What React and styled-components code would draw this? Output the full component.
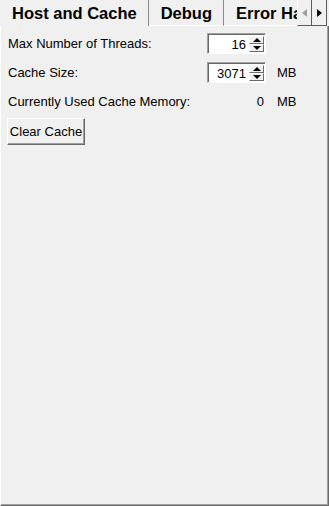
import React from 'react';
import styled, { createGlobalStyle } from 'styled-components';

const GlobalStyle = createGlobalStyle`
  html, body {
    margin: 0;
    padding: 0;
    background: #f0f0f0;
  }
  body {
    font-family: "Liberation Sans", Arial, sans-serif;
    color: #000;
  }
`;

const Window = styled.div`
  width: 329px;
  height: 506px;
  display: flex;
  flex-direction: column;
  background: #f0f0f0;
  overflow: hidden;
`;

const TabStrip = styled.div`
  display: flex;
  height: 26px;
  flex-shrink: 0;
  padding-right: 2px;
`;

const TabList = styled.div`
  flex: 1;
  display: flex;
  overflow: hidden;
  min-width: 0;
`;

const Tab = styled.div`
  flex-shrink: 0;
  box-sizing: border-box;
  height: 26px;
  padding: 1px 11px 0 12px;
  display: flex;
  align-items: center;
  font-size: 16.5px;
  font-weight: bold;
  white-space: nowrap;
  border-right: 1px solid #8a8a8a;
  border-bottom: ${(p) => (p.$active ? 'none' : '1px solid #fff')};
`;

const ScrollButton = styled.div`
  width: 15px;
  height: 26px;
  box-sizing: border-box;
  display: flex;
  align-items: center;
  justify-content: center;
  background: #f0f0f0;
  border-right: 1px solid #5a5a5a;
  border-bottom: 1px solid #5a5a5a;
  border-left: ${(p) => (p.$first ? '1px solid #fff' : 'none')};
  flex-shrink: 0;
`;

const Arrow = styled.span`
  width: 0;
  height: 0;
  border-top: 4.5px solid transparent;
  border-bottom: 4.5px solid transparent;
  ${(p) =>
    p.$dir === 'left'
      ? `border-right: 5px solid ${p.$disabled ? '#a0a0a0' : '#000'};`
      : `border-left: 5px solid ${p.$disabled ? '#a0a0a0' : '#000'};`}
`;

const Panel = styled.div`
  flex: 1;
  border-left: 1px solid #fff;
  border-right: 1px solid #696969;
  border-bottom: 1px solid #696969;
  box-shadow: inset -1px -1px 0 #a0a0a0;
  padding: 7px 0 0 7px;
  font-size: 13px;
`;

const FormGrid = styled.div`
  display: grid;
  grid-template-columns: 199px 59px auto;
  column-gap: 0;
  row-gap: 8px;
  align-items: center;
`;

const Label = styled.div`
  white-space: nowrap;
  height: 21px;
  line-height: 21px;
`;

const Unit = styled.div`
  line-height: 21px;
  padding-left: 11px;
`;

const Spinner = styled.div`
  height: 21px;
  box-sizing: border-box;
  display: flex;
  background: #fff;
  border-top: 1px solid #a0a0a0;
  border-left: 1px solid #a0a0a0;
  border-right: 1px solid #fff;
  border-bottom: 1px solid #fff;
  box-shadow: inset 1px 1px 0 #696969;
`;

const SpinValue = styled.div`
  flex: 1;
  text-align: right;
  padding-right: 3px;
  line-height: 19px;
  padding-top: 1px;
`;

const SpinButtons = styled.div`
  width: 16px;
  display: flex;
  flex-direction: column;
  padding: 2px 1px 1px 0;
  box-sizing: border-box;
`;

const SpinButton = styled.div`
  flex: 1;
  display: flex;
  align-items: center;
  justify-content: center;
  background: #f0f0f0;
  border-top: 1px solid #fff;
  border-left: 1px solid #fff;
  border-right: 1px solid #696969;
  border-bottom: 1px solid #696969;
`;

const SpinArrow = styled.span`
  width: 0;
  height: 0;
  border-left: 4px solid transparent;
  border-right: 4px solid transparent;
  ${(p) =>
    p.$up ? 'border-bottom: 4px solid #000;' : 'border-top: 4px solid #000;'}
`;

const ReadValue = styled.div`
  text-align: right;
  padding-right: 2px;
  line-height: 21px;
`;

const Button = styled.button`
  margin: 6px 0 0 -1px;
  width: 78px;
  height: 27px;
  box-sizing: border-box;
  font-family: "Liberation Sans", Arial, sans-serif;
  font-size: 13px;
  color: #000;
  background: #f0f0f0;
  border-top: 1px solid #fff;
  border-left: 1px solid #fff;
  border-right: 1px solid #696969;
  border-bottom: 1px solid #696969;
  box-shadow: inset -1px -1px 0 #a0a0a0;
  padding: 0;
`;

const SpinBox = ({ value }) => (
  <Spinner>
    <SpinValue>{value}</SpinValue>
    <SpinButtons>
      <SpinButton>
        <SpinArrow $up />
      </SpinButton>
      <SpinButton>
        <SpinArrow />
      </SpinButton>
    </SpinButtons>
  </Spinner>
);

const tabs = ['Host and Cache', 'Debug', 'Error Handling'];

export default function App() {
  return (
    <>
      <GlobalStyle />
      <Window>
        <TabStrip>
          <TabList>
            {tabs.map((t, i) => (
              <Tab key={t} $active={i === 0}>
                {t}
              </Tab>
            ))}
          </TabList>
          <ScrollButton $first>
            <Arrow $dir="left" $disabled />
          </ScrollButton>
          <ScrollButton>
            <Arrow $dir="right" />
          </ScrollButton>
        </TabStrip>
        <Panel>
          <FormGrid>
            <Label>Max Number of Threads:</Label>
            <SpinBox value="16" />
            <span />
            <Label>Cache Size:</Label>
            <SpinBox value="3071" />
            <Unit>MB</Unit>
            <Label>Currently Used Cache Memory:</Label>
            <ReadValue>0</ReadValue>
            <Unit>MB</Unit>
          </FormGrid>
          <Button>Clear Cache</Button>
        </Panel>
      </Window>
    </>
  );
}
